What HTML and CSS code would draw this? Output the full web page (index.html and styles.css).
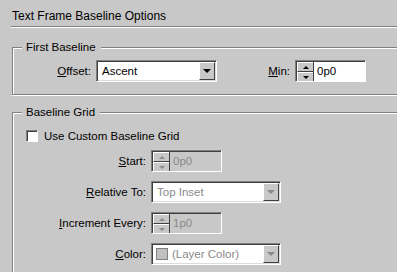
FILE: index.html
```html
<!DOCTYPE html>
<html lang="en">
  <head>
    <meta charset="UTF-8" />
    <title>Text Frame Baseline Options</title>
    <link rel="stylesheet" href="styles.css">
  </head>
  <body>
    <div class="dialog">
      <div class="title">Text Frame Baseline Options</div>

      <!-- First Baseline -->
      <fieldset class="group first">
        <legend>First Baseline</legend>
        <div class="row">
          <label class="lbl offset-lbl"><u>O</u>ffset:</label>
          <div class="select offset">
            <span class="value">Ascent</span>
            <span class="drop"><span class="tri"></span></span>
          </div>
          <label class="lbl min-lbl"><u>M</u>in:</label>
          <div class="spinner">
            <div class="spin-btns">
              <span class="spin up"><span class="tri-up"></span></span>
              <span class="spin down"><span class="tri"></span></span>
            </div>
            <span class="value">0p0</span>
          </div>
        </div>
      </fieldset>

      <!-- Baseline Grid -->
      <fieldset class="group grid">
        <legend>Baseline Grid</legend>
        <label class="check"><span class="box"></span>Use Custom Baseline Grid</label>
        <div class="form">
          <label class="lbl"><u>S</u>tart:</label>
          <div class="spinner disabled">
            <div class="spin-btns">
              <span class="spin up"><span class="tri-up"></span></span>
              <span class="spin down"><span class="tri"></span></span>
            </div>
            <span class="value">0p0</span>
          </div>

          <label class="lbl"><u>R</u>elative To:</label>
          <div class="select wide disabled">
            <span class="value">Top Inset</span>
            <span class="drop"><span class="tri"></span></span>
          </div>

          <label class="lbl"><u>I</u>ncrement Every:</label>
          <div class="spinner disabled">
            <div class="spin-btns">
              <span class="spin up"><span class="tri-up"></span></span>
              <span class="spin down"><span class="tri"></span></span>
            </div>
            <span class="value">1p0</span>
          </div>

          <label class="lbl"><u>C</u>olor:</label>
          <div class="select wide disabled">
            <span class="swatch"></span>
            <span class="value swatch-value">(Layer Color)</span>
            <span class="drop"><span class="tri"></span></span>
          </div>
        </div>
      </fieldset>
    </div>
  </body>
</html>
```

FILE: styles.css
```css
* {
  margin: 0;
  padding: 0;
  box-sizing: border-box;
}

body {
  background: #c8c8c8;
  font-family: "Liberation Sans", Arial, sans-serif;
  font-size: 11.5px;
  color: #000;
  overflow: hidden;
}

.dialog {
  width: 397px;
  height: 272px;
  padding-left: 11px;
  overflow: hidden;
}

.title {
  font-size: 12px;
  line-height: 14px;
  padding: 9px 0 3px 1px;
  border-bottom: 1px solid #808080;
  box-shadow: 0 1px 0 #fff;
}

/* Group boxes, open on the right: they run on past the window edge */
.group {
  margin-left: 1px;
  border: 1px solid #808080;
  border-right: 0;
  box-shadow: inset 1px 1px 0 #fff, 0 1px 0 #fff;
  min-width: 0;
}

.group legend {
  line-height: 14px;
  margin-left: 9px;
  padding: 0 5px 0 4px;
  background: #c8c8c8;
}

.first {
  margin-top: 13px;
  padding: 6px 0 12px;
}

.grid {
  margin-top: 10px;
  padding: 10px 0 0;
  height: 167px;
  border-bottom: 0;
  box-shadow: inset 1px 1px 0 #fff;
}

.row {
  display: flex;
  align-items: center;
  height: 22px;
}

.lbl {
  text-align: right;
  white-space: nowrap;
}

.offset-lbl {
  width: 78px;
  margin-right: 5px;
}

.min-lbl {
  width: 73px;
  margin-right: 5px;
}

/* Checkbox */
.check {
  display: flex;
  align-items: center;
  gap: 6px;
  margin-left: 13px;
  line-height: 14px;
}

.check .box {
  width: 12px;
  height: 12px;
  background: #fff;
  border: 1px solid;
  border-color: #808080 #fff #fff #808080;
  box-shadow: inset 1px 1px 0 #404040;
}

.form {
  display: grid;
  grid-template-columns: 133px auto;
  column-gap: 5px;
  row-gap: 9px;
  margin-top: 7px;
  align-items: center;
  justify-items: start;
}

.form .lbl {
  justify-self: end;
}

/* Spinner field */
.spinner {
  display: flex;
  width: 71px;
  height: 22px;
  background: #fff;
  border: 1px solid;
  border-color: #808080 #fff #fff #808080;
  box-shadow: inset 1px 1px 0 #404040;
  padding: 1px 0 0 1px;
}

.spin-btns {
  width: 17px;
  display: flex;
  flex-direction: column;
  border-right: 1px solid #404040;
}

.spin {
  flex: 1;
  display: flex;
  align-items: center;
  justify-content: center;
  background: #c8c8c8;
  border-top: 1px solid #fff;
  border-left: 1px solid #fff;
}

.spin.up {
  border-bottom: 1px solid #404040;
}

.spinner .value {
  padding-left: 3px;
  line-height: 19px;
}

.tri {
  width: 0;
  height: 0;
  border-left: 3px solid transparent;
  border-right: 3px solid transparent;
  border-top: 3px solid #000;
}

.tri-up {
  width: 0;
  height: 0;
  border-left: 3px solid transparent;
  border-right: 3px solid transparent;
  border-bottom: 3px solid #000;
}

.spinner.disabled {
  background: #c8c8c8;
  color: #8a8a8a;
}

.spinner.disabled .tri {
  border-top-color: #8a8a8a;
}

.spinner.disabled .tri-up {
  border-bottom-color: #8a8a8a;
}

/* Drop-down */
.select {
  display: flex;
  align-items: stretch;
  height: 22px;
  background: #fff;
  border: 1px solid;
  border-color: #808080 #fff #fff #808080;
  box-shadow: inset 1px 1px 0 #404040, inset -1px -1px 0 #dcdcdc;
  padding: 1px;
}

.select.offset {
  width: 121px;
}

.select.wide {
  width: 130px;
}

.select .value {
  flex: 1;
  padding-left: 4px;
  line-height: 18px;
  white-space: nowrap;
}

.select.disabled .value {
  color: #8a8a8a;
}

.drop {
  width: 16px;
  display: flex;
  align-items: center;
  justify-content: center;
  background: #c8c8c8;
  border: 1px solid;
  border-color: #fff #404040 #404040 #fff;
}

.drop .tri {
  border-left-width: 4px;
  border-right-width: 4px;
  border-top-width: 4px;
}

.select.disabled .drop .tri {
  border-top-color: #8a8a8a;
}

.swatch {
  width: 12px;
  height: 12px;
  margin: auto 0 auto 3px;
  background: #c0c0c0;
  border: 1px solid #808080;
}

.swatch-value.value {
  padding-left: 4px;
}
```
